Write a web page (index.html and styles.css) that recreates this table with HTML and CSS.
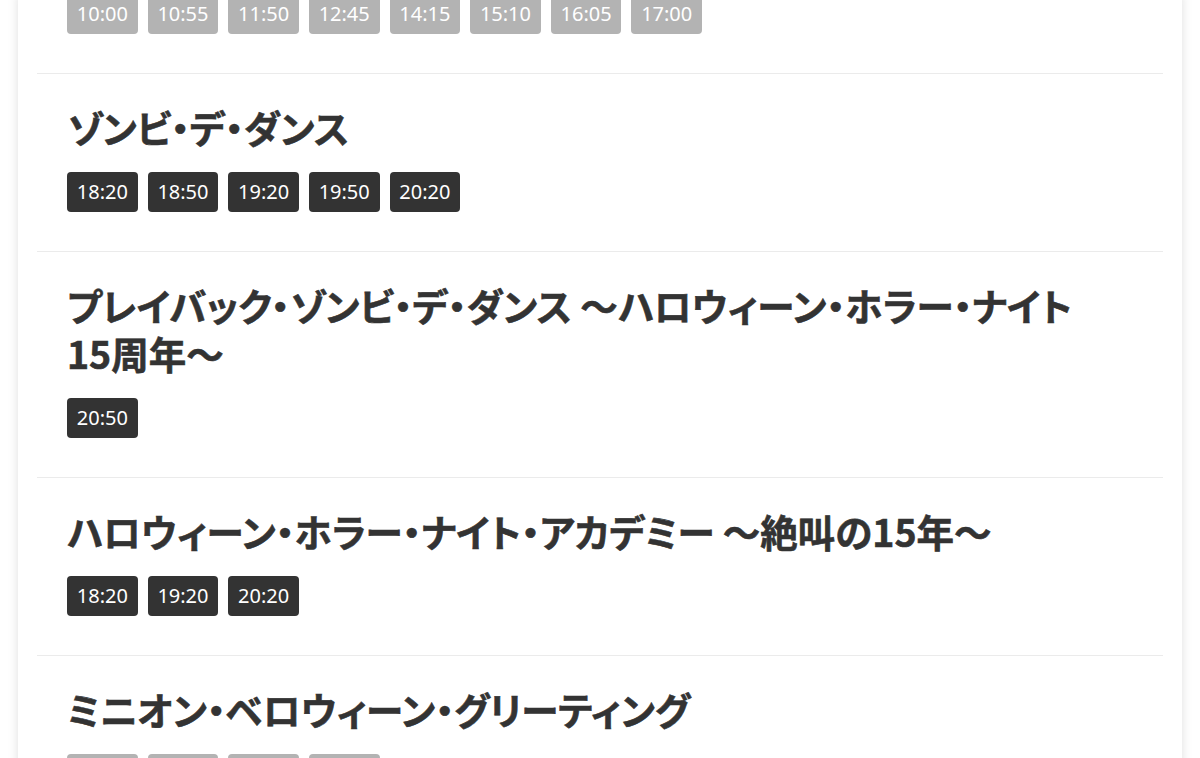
FILE: index.html
```html
<!DOCTYPE html>
<html lang="ja">
<head>
<meta charset="utf-8">
<title>ショー・スケジュール</title>
<link rel="stylesheet" href="styles.css">
</head>
<body>
<main class="card">
  <section class="item item-first">
    <ul class="times">
      <li class="time past">10:00</li>
      <li class="time past">10:55</li>
      <li class="time past">11:50</li>
      <li class="time past">12:45</li>
      <li class="time past">14:15</li>
      <li class="time past">15:10</li>
      <li class="time past">16:05</li>
      <li class="time past">17:00</li>
    </ul>
  </section>
  <section class="item">
    <h2 class="title">ゾンビ・デ・ダンス</h2>
    <ul class="times">
      <li class="time">18:20</li>
      <li class="time">18:50</li>
      <li class="time">19:20</li>
      <li class="time">19:50</li>
      <li class="time">20:20</li>
    </ul>
  </section>
  <section class="item">
    <h2 class="title">プレイバック・ゾンビ・デ・ダンス ～ハロウィーン・ホラー・ナイト<span class="keep">15周年～</span></h2>
    <ul class="times">
      <li class="time">20:50</li>
    </ul>
  </section>
  <section class="item">
    <h2 class="title">ハロウィーン・ホラー・ナイト・アカデミー ～絶叫の15年～</h2>
    <ul class="times">
      <li class="time">18:20</li>
      <li class="time">19:20</li>
      <li class="time">20:20</li>
    </ul>
  </section>
  <section class="item">
    <h2 class="title">ミニオン・ベロウィーン・グリーティング</h2>
    <ul class="times">
      <li class="time past">10:00</li>
      <li class="time past">10:55</li>
      <li class="time past">11:50</li>
      <li class="time past">12:45</li>
    </ul>
  </section>
</main>
</body>
</html>
```

FILE: styles.css
```css
html, body {
  margin: 0;
  padding: 0;
  background: #ffffff;
  height: 100%;
  overflow: hidden;
}

body {
  font-family: "Noto Sans CJK JP", "Noto Sans", sans-serif;
  color: #333333;
}

.card {
  margin: -6px 18px 0;
  padding: 0 19px;
  background: #ffffff;
  box-shadow: 0 0 10px rgba(0, 0, 0, 0.13);
}

.item {
  padding: 29px 30px 39px;
  border-top: 1px solid #ebebeb;
}

.item-first {
  padding-top: 0;
  border-top: none;
}

.title {
  margin: 0 0 21px;
  font-family: "Noto Sans CJK JP", sans-serif;
  font-size: 37.5px;
  line-height: 48px;
  font-weight: 700;
  font-feature-settings: "palt";
  color: #333333;
  -webkit-text-stroke: 0.6px #333333;
}

.keep {
  white-space: nowrap;
}

.times {
  list-style: none;
  margin: 0;
  padding: 0;
  display: flex;
  flex-wrap: wrap;
  gap: 10px;
}

.time {
  height: 40px;
  line-height: 40px;
  padding: 0 9.75px;
  border-radius: 4px;
  background: #333333;
  color: #ffffff;
  font-family: "Noto Sans", "Open Sans", sans-serif;
  font-size: 20px;
}

.time.past {
  background: #b3b3b3;
}
```
